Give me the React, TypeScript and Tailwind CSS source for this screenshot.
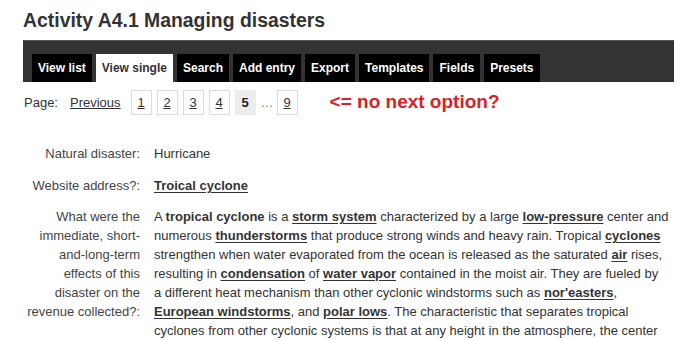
import React from 'react'

const tabs = ['View list', 'View single', 'Search', 'Add entry', 'Export', 'Templates', 'Fields', 'Presets']

function L({ children }: { children: React.ReactNode }) {
  return <a className="font-bold underline text-[#333] underline-offset-[2px]">{children}</a>
}

function PageBox({ n, current }: { n: string; current?: boolean }) {
  if (current) {
    return (
      <span className="w-[21px] h-[25px] flex items-center justify-center bg-[#ececec] font-bold text-[#222]">
        {n}
      </span>
    )
  }
  return (
    <span className="w-[21px] h-[25px] flex items-center justify-center border border-[#dcdcdc] underline text-[#333]">
      {n}
    </span>
  )
}

export default function App() {
  return (
    <div className="w-[684px] h-[340px] overflow-hidden bg-white text-[#333] font-['Liberation_Sans',Arial,sans-serif]">
      <div className="pl-[23px] pt-[8px]">
        <h2 className="text-[19.4px] font-bold leading-[24px] text-[#333]">Activity A4.1 Managing disasters</h2>

        {/* Tab bar */}
        <div className="mt-[8px] w-[651px] h-[42px] bg-[#333] border-t border-[#555] flex items-end gap-[4px] pl-[9px]">
          {tabs.map((t) =>
            t === 'View single' ? (
              <div key={t} className="h-[28px] px-[6px] flex items-center bg-white text-[#333] text-[12px] font-bold">
                {t}
              </div>
            ) : (
              <div key={t} className="h-[28px] px-[6px] flex items-center bg-black text-white text-[12px] font-bold">
                {t}
              </div>
            )
          )}
        </div>

        {/* Paging */}
        <div className="mt-[8px] h-[25px] flex items-center text-[13px] text-[#333]">
          <span className="pl-[1px]">Page:</span>
          <span className="ml-[12px] underline">Previous</span>
          <div className="ml-[10px] flex items-center gap-[5px]">
            <PageBox n="1" />
            <PageBox n="2" />
            <PageBox n="3" />
            <PageBox n="4" />
            <PageBox n="5" current />
            <span className="w-[11px] text-center text-[#888]">…</span>
            <PageBox n="9" />
          </div>
          <span className="ml-[32px] text-[19px] font-bold text-[#d8222a]">&lt;= no next option?</span>
        </div>
      </div>

      {/* Entry fields */}
      <div className="mt-[29px] pl-[24px] text-[13px] leading-[19px]">
        <div className="flex mb-[13px]">
          <div className="w-[116px] text-right text-[#444]">Natural disaster:</div>
          <div className="ml-[14px] w-[520px]">Hurricane</div>
        </div>
        <div className="flex mb-[12px]">
          <div className="w-[116px] text-right text-[#444]">Website address?:</div>
          <div className="ml-[14px] w-[520px]">
            <L>Troical cyclone</L>
          </div>
        </div>
        <div className="flex">
          <div className="w-[116px] text-right text-[#444]">
            What were the immediate, short-and-long-term effects of this disaster on the revenue collected?:
          </div>
          <div className="ml-[14px] w-[530px]">
            A <b>tropical cyclone</b> is a <L>storm system</L> characterized by a large <L>low-pressure</L> center and
            <br />
            numerous <L>thunderstorms</L> that produce strong winds and heavy rain. Tropical <L>cyclones</L>
            <br />
            strengthen when water evaporated from the ocean is released as the saturated <L>air</L> rises,
            <br />
            resulting in <L>condensation</L> of <L>water vapor</L> contained in the moist air. They are fueled by
            <br />
            a different heat mechanism than other cyclonic windstorms such as <L>nor'easters</L>,
            <br />
            <L>European windstorms</L>, and <L>polar lows</L>. The characteristic that separates tropical
            <br />
            cyclones from other cyclonic systems is that at any height in the atmosphere, the center
          </div>
        </div>
      </div>
    </div>
  )
}
